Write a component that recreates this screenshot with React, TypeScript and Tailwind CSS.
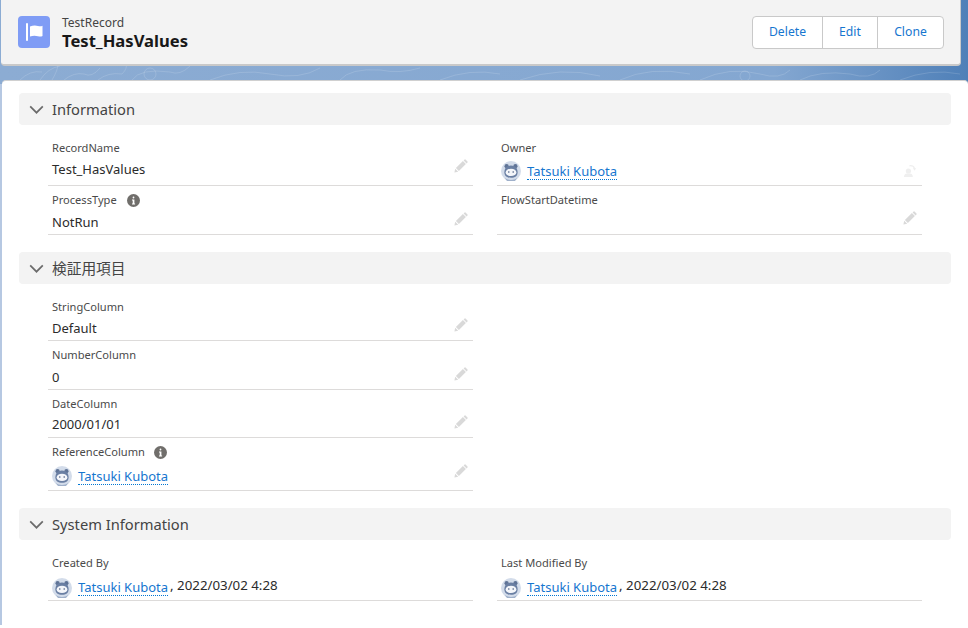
import React from "react";

const FONT = "font-['Noto_Sans','Noto_Sans_CJK_JP',sans-serif]";

function Pencil() {
  return (
    <svg width="14" height="14" viewBox="0 0 14 14" className="shrink-0">
      <path d="M0.4 13.6 L1.2 9.8 L4.2 12.8 Z M1.9 9.1 L8.9 2.1 L11.9 5.1 L4.9 12.1 Z M9.6 1.4 L10.6 0.5 Q11 0.2 11.5 0.5 L13.5 2.5 Q13.8 3 13.5 3.4 L12.6 4.4 Z" fill="#d9d9d9" />
    </svg>
  );
}

function SwapOwner() {
  return (
    <svg width="12" height="12" viewBox="0 0 12 12" className="shrink-0">
      <circle cx="4.4" cy="6" r="2.6" fill="#efefef" />
      <path d="M0 12 Q0 8.6 3 8.4 L5.8 8.4 Q8.8 8.6 8.8 12 Z" fill="#efefef" />
      <path d="M5.4 0.8 Q9.4 0.2 10.6 3.6" fill="none" stroke="#efefef" strokeWidth="1.2" />
      <path d="M8.8 3.2 L12 3 L10.8 5.8 Z" fill="#efefef" />
    </svg>
  );
}

function Info() {
  return (
    <span className="inline-flex h-[13px] w-[13px] items-center justify-center rounded-full bg-[#706e6b]">
      <svg width="13" height="13" viewBox="0 0 13 13">
        <rect x="5.6" y="2.6" width="1.8" height="1.8" rx="0.9" fill="#fff" />
        <path d="M5 5.6 H7.4 V9.4 H8.1 V10.4 H5 V9.4 H5.7 V6.6 H5 Z" fill="#fff" />
      </svg>
    </span>
  );
}

function Avatar() {
  return (
    <svg width="20" height="20" viewBox="0 0 20 20" className="shrink-0">
      <circle cx="10" cy="10" r="10" fill="#d3dcea" />
      <circle cx="5.6" cy="5.2" r="2.1" fill="#5f7396" />
      <circle cx="14.4" cy="5.2" r="2.1" fill="#5f7396" />
      <path d="M10 4.4 C14.6 4.4 16.6 7.6 16.6 11.2 C16.6 15 14 16.8 10 16.8 C6 16.8 3.4 15 3.4 11.2 C3.4 7.6 5.4 4.4 10 4.4 Z" fill="#6a7fa3" />
      <ellipse cx="10" cy="11.4" rx="5.4" ry="3.6" fill="#f4f6fa" />
      <circle cx="7.8" cy="11" r="0.8" fill="#4a5d80" />
      <circle cx="12.2" cy="11" r="0.8" fill="#4a5d80" />
      <path d="M3.5 17 Q10 21 16.5 17 L14 20 L6 20 Z" fill="#9fb0ca" />
    </svg>
  );
}

function UserLink() {
  return (
    <span className="inline-flex items-center gap-[6px]">
      <Avatar />
      <a className="border-b border-dotted border-[#0176d3] text-[13px] leading-[16px] text-[#1676cf]">Tatsuki Kubota</a>
    </span>
  );
}

function Field({
  label,
  info,
  height,
  labelPad = "",
  valueTop,
  children,
  action,
  actionPos = "bottom-[8px] right-[5px]",
  infoGap = "ml-[10px]",
}: {
  label: string;
  info?: boolean;
  height: string;
  labelPad?: string;
  valueTop: string;
  children?: React.ReactNode;
  action?: React.ReactNode;
  actionPos?: string;
  infoGap?: string;
}) {
  return (
    <div className={`relative border-b border-[#dddbda] px-[4px] ${height}`}>
      <div className={`flex items-center text-[11.1px] leading-[16px] text-[#4a4a4a] ${labelPad}`}>
        <span>{label}</span>
        {info && <span className={`${infoGap} flex`}><Info /></span>}
      </div>
      <div className={`flex min-h-[20px] items-center text-[13px] leading-[20px] text-[#2b2b2b] ${valueTop}`}>
        {children}
      </div>
      {action && <div className={`absolute flex ${actionPos}`}>{action}</div>}
    </div>
  );
}

function SectionHeader({ title }: { title: string }) {
  return (
    <div className="flex h-[32px] items-center rounded-[4px] bg-[#f3f3f3] pl-[10px] text-[14.7px] text-[#444444]">
      <svg width="15" height="15" viewBox="0 0 15 15" className="mr-[8px] shrink-0">
        <path d="M1.2 4.4 L7.5 10.7 L13.8 4.4" fill="none" stroke="#6b6b6b" strokeWidth="1.7" />
      </svg>
      <span>{title}</span>
    </div>
  );
}

function Grid({ left, right }: { left: React.ReactNode; right?: React.ReactNode }) {
  return (
    <div className="flex gap-[24px] pl-[29px]">
      <div className="w-[425px]">{left}</div>
      <div className="w-[425px]">{right}</div>
    </div>
  );
}

function Stamp() {
  return <span className="mb-[5px] ml-[2px] text-[13.3px]">, 2022/03/02 4:28</span>;
}

export default function App() {
  return (
    <div className={`relative h-[628px] w-[968px] overflow-hidden bg-gradient-to-r from-[#8cacd3] via-[#84a7d1] via-80% to-[#4f80b8] ${FONT}`}>
      <svg className="absolute left-0 top-[62px]" width="968" height="20" viewBox="0 0 968 20" fill="none" stroke="#ffffff" strokeOpacity="0.14" strokeWidth="1">
        <path d="M20 18 Q30 8 42 10 M40 18 Q48 6 60 4 M52 18 Q58 8 58 2 M64 18 Q74 10 84 12 Q92 16 100 6 M98 18 Q108 10 122 12 Q128 6 126 1 M132 18 Q140 6 170 10 Q180 14 190 4" />
        <circle cx="150" cy="12" r="6" />
        <path d="M210 18 Q240 6 270 12 Q300 18 320 6 M340 18 Q350 6 380 8 Q400 12 420 6 M440 18 Q470 6 500 12 M520 18 Q560 4 600 14 M620 18 Q650 4 690 12 M700 18 Q730 4 760 12 Q780 18 790 8 M800 18 Q820 8 850 12 Q870 18 880 8" />
        <circle cx="745" cy="14" r="5" />
        <path d="M900 18 Q930 6 960 12" />
      </svg>
      <span className="absolute left-0 top-[84px] h-[541px] w-[2px] bg-[#b6c8e2]" />
      <span className="absolute bottom-0 left-0 h-[3px] w-[2px] bg-white" />

      <header className="relative ml-[1px] flex h-[66px] w-[960px] items-center rounded-b-[4px] border-b-2 border-r border-[#c9c9c9] bg-[#f3f3f3] pl-[17px] pr-[16px]">
        <div className="flex h-[32px] w-[32px] items-center justify-center rounded-[4px] bg-[#7f9cf5]">
          <svg width="22" height="22" viewBox="0 0 22 22">
            <rect x="3" y="2" width="2" height="18" rx="1" fill="#ffffff" />
            <path d="M7 5.5 Q11 4 15 5 Q17.5 5.8 19.5 4.8 V15 Q17.5 16 15 15.2 Q11 14 7 15.5 Z" fill="#ffffff" />
          </svg>
        </div>
        <div className="ml-[12px] mt-[2px] flex flex-col gap-[1px]">
          <div className="text-[12px] leading-[15px] text-[#444444]">TestRecord</div>
          <div className="text-[16.6px] font-bold leading-[20px] text-[#181818]">Test_HasValues</div>
        </div>
        <div className="ml-auto mt-[1px] flex h-[33px] overflow-hidden rounded-[4px] border border-[#c9c9c9] bg-white text-[12.2px] text-[#1676cf]">
          <button className="flex w-[70px] items-center justify-center border-r border-[#c9c9c9]">Delete</button>
          <button className="flex w-[55px] items-center justify-center border-r border-[#c9c9c9]">Edit</button>
          <button className="flex w-[65px] items-center justify-center">Clone</button>
        </div>
      </header>

      <main className="relative ml-[2px] mt-[14px] h-[548px] rounded-t-[4px] border-t border-[#d0d0d0] bg-white pl-[17px] pt-[12px]">
        <div className="w-[932px]">
          <SectionHeader title="Information" />
          <div className="mt-[15px]">
            <Grid
              left={
                <>
                  <Field label="RecordName" height="h-[46px]" valueTop="mt-[3px]" actionPos="bottom-[12px] right-[5px]" action={<Pencil />}>Test_HasValues</Field>
                  <Field label="ProcessType" info height="h-[49px]" labelPad="pt-[6px]" valueTop="mt-[4px]" action={<Pencil />}>NotRun</Field>
                </>
              }
              right={
                <>
                  <Field label="Owner" height="h-[46px]" valueTop="mt-[5px]" actionPos="bottom-[8px] right-[6px]" action={<SwapOwner />}><UserLink /></Field>
                  <Field label="FlowStartDatetime" height="h-[49px]" labelPad="pt-[6px]" valueTop="mt-[4px]" actionPos="bottom-[9px] right-[5px]" action={<Pencil />} />
                </>
              }
            />
          </div>
        </div>
        <div className="mt-[17px] w-[932px]">
          <SectionHeader title="検証用項目" />
          <div className="mt-[15px]">
            <Grid
              left={
                <>
                  <Field label="StringColumn" height="h-[42px]" valueTop="mt-[3px]" action={<Pencil />}>Default</Field>
                  <Field label="NumberColumn" height="h-[49px]" labelPad="pt-[6px]" valueTop="mt-[4px]" action={<Pencil />}>0</Field>
                  <Field label="DateColumn" height="h-[48px]" labelPad="pt-[6px]" valueTop="mt-[2px]" action={<Pencil />}>2000/01/01</Field>
                  <Field label="ReferenceColumn" info infoGap="ml-[9px]" height="h-[53px]" labelPad="pt-[6px]" valueTop="mt-[6px]" actionPos="bottom-[12px] right-[5px]" action={<Pencil />}><UserLink /></Field>
                </>
              }
            />
          </div>
        </div>
        <div className="mt-[17px] w-[932px]">
          <SectionHeader title="System Information" />
          <div className="mt-[15px]">
            <Grid
              left={
                <Field label="Created By" height="h-[46px]" valueTop="mt-[4px]">
                  <UserLink /><Stamp />
                </Field>
              }
              right={
                <Field label="Last Modified By" height="h-[46px]" valueTop="mt-[4px]">
                  <UserLink /><Stamp />
                </Field>
              }
            />
          </div>
        </div>
      </main>
    </div>
  );
}
